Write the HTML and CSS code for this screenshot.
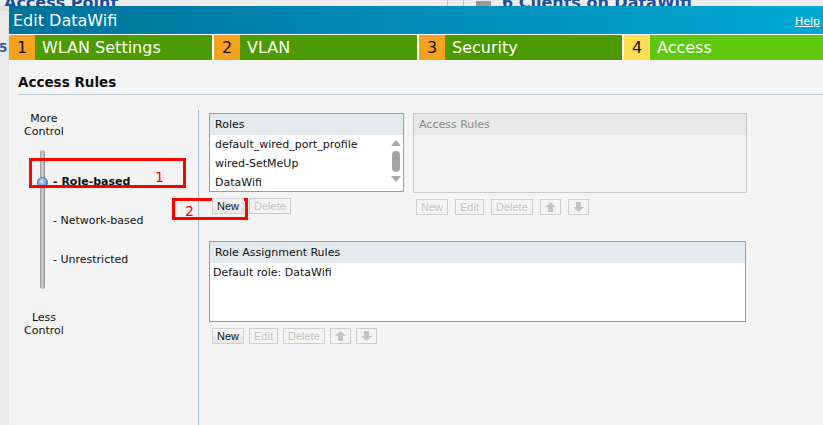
FILE: index.html
```html
<!DOCTYPE html>
<html lang="en">
<head>
    <meta charset="UTF-8">
    <title>Edit DataWifi</title>
    <link rel="stylesheet" href="styles.css">
</head>
<body>
    <!-- page behind the dialog -->
    <div class="backdrop">
        <span class="bd-title">Access Point</span>
        <span class="bd-sep"></span>
        <span class="bd-sep"></span>
        <span class="bd-icon"></span>
        <span class="bd-clients">6 Clients on DataWifi</span>
    </div>

    <div class="screen">
        <div class="bd-side"><span>5</span></div>

        <div class="dialog">
            <div class="titlebar">
                <span class="title">Edit DataWifi</span>
                <a class="help" href="#">Help</a>
            </div>

            <div class="steps">
                <div class="step"><span class="num">1</span><span class="label">WLAN Settings</span></div>
                <div class="step"><span class="num">2</span><span class="label">VLAN</span></div>
                <div class="step"><span class="num">3</span><span class="label">Security</span></div>
                <div class="step current"><span class="num">4</span><span class="label">Access</span></div>
            </div>

            <div class="content">
                <h2 class="section-title">Access Rules</h2>

                <div class="section">
                    <!-- LEFT: control level slider -->
                    <div class="slider-col">
                        <div class="control-label">More<br>Control</div>
                        <div class="scale">
                            <div class="track"><span class="thumb"></span></div>
                            <ul class="levels">
                                <li class="active">- Role-based</li>
                                <li>- Network-based</li>
                                <li>- Unrestricted</li>
                            </ul>
                        </div>
                        <div class="control-label less">Less<br>Control</div>
                    </div>

                    <!-- RIGHT: roles and rules -->
                    <div class="rules-col">
                        <div class="top-row">
                            <div class="block roles-block">
                                <div class="box">
                                    <div class="box-head">Roles</div>
                                    <div class="box-body list-body">
                                        <ul class="items">
                                            <li>default_wired_port_profile</li>
                                            <li>wired-SetMeUp</li>
                                            <li>DataWifi</li>
                                        </ul>
                                        <div class="scrollbar">
                                            <span class="arr up"></span>
                                            <span class="sthumb"></span>
                                            <span class="arr down"></span>
                                        </div>
                                    </div>
                                </div>
                                <div class="btn-row">
                                    <button class="btn">New</button>
                                    <button class="btn" disabled>Delete</button>
                                </div>
                            </div>

                            <div class="block access-block">
                                <div class="box disabled">
                                    <div class="box-head">Access Rules</div>
                                    <div class="box-body"></div>
                                </div>
                                <div class="btn-row wide">
                                    <button class="btn" disabled>New</button>
                                    <button class="btn" disabled>Edit</button>
                                    <button class="btn" disabled>Delete</button>
                                    <button class="btn arrow-btn first-arrow" disabled><svg width="11" height="10" viewBox="0 0 11 10"><path d="M5.5 0 L11 5 H8 V10 H3 V5 H0 Z" fill="#c4c4c4"/></svg></button>
                                    <button class="btn arrow-btn" disabled><svg width="11" height="10" viewBox="0 0 11 10"><path d="M5.5 10 L11 5 H8 V0 H3 V5 H0 Z" fill="#c4c4c4"/></svg></button>
                                </div>
                            </div>
                        </div>

                        <div class="block assign-block">
                            <div class="box">
                                <div class="box-head">Role Assignment Rules</div>
                                <div class="box-body assign-body">Default role: DataWifi</div>
                            </div>
                            <div class="btn-row">
                                <button class="btn">New</button>
                                <button class="btn" disabled>Edit</button>
                                <button class="btn" disabled>Delete</button>
                                <button class="btn arrow-btn" disabled><svg width="11" height="10" viewBox="0 0 11 10"><path d="M5.5 0 L11 5 H8 V10 H3 V5 H0 Z" fill="#c4c4c4"/></svg></button>
                                <button class="btn arrow-btn" disabled><svg width="11" height="10" viewBox="0 0 11 10"><path d="M5.5 10 L11 5 H8 V0 H3 V5 H0 Z" fill="#c4c4c4"/></svg></button>
                            </div>
                        </div>
                    </div>
                </div>
            </div>
        </div>
    </div>

    <!-- red annotation marks drawn over the screenshot -->
    <div class="mark mark-1"><span>1</span></div>
    <div class="mark mark-2"><span>2</span></div>
</body>
</html>
```

FILE: styles.css
```css
:root {
    --page-bg: #f4f4f4;
    --teal-dark: #00729a;
    --teal-light: #02a8d4;
    --step-num: #f7a21f;
    --step-label: #4c9b00;
    --step-num-cur: #ffdf55;
    --step-label-cur: #5ec80e;
    --box-border: #8e9fad;
    --box-head: #e2eaee;
    --muted: #c4c4c4;
    --mark: #ff0000;
}

* { box-sizing: border-box; margin: 0; padding: 0; }

body {
    font-family: 'DejaVu Sans', Verdana, sans-serif;
    font-size: 11px;
    color: #111;
    background: #e9e9e9;
    width: 823px;
    height: 425px;
    overflow: hidden;
    position: relative;
}

/* ---- page behind the dialog ---- */
.backdrop {
    height: 6px;
    overflow: hidden;
    display: flex;
    align-items: flex-end;
    background: #ececec;
    white-space: nowrap;
}
.bd-title, .bd-clients {
    font-weight: bold;
    font-size: 16px;
    line-height: 16px;
    color: #1c4f9a;
    margin-bottom: -5px;
}
.bd-title { margin-left: 4px; width: 443px; }
.bd-sep { width: 1px; height: 6px; background: #c4c4c4; margin-right: 15px; }
.bd-icon { width: 15px; height: 5px; background: #9a9a9a; margin: 0 11px 0 -3px; }
.bd-clients { color: #1f4fa0; }

.screen { display: flex; height: 419px; }

.bd-side {
    width: 8px;
    background: #eaeaea;
    border-top: 5px solid #e2e2e2;
    color: #2a5aa8;
    font-size: 12px;
    font-weight: bold;
    overflow: hidden;
}
.bd-side span { display: block; margin-top: 30px; margin-left: -1px; }

/* ---- dialog ---- */
.dialog {
    flex: 1;
    display: flex;
    flex-direction: column;
    border-left: 1px solid #dfe7ea;
    background: var(--page-bg);
}

.titlebar {
    height: 29px;
    display: flex;
    align-items: center;
    justify-content: space-between;
    padding: 0 3px 0 4px;
    background: linear-gradient(to right, var(--teal-dark), var(--teal-light));
    border-bottom: 1px solid #fff;
    color: #fff;
}
.title { font-size: 16px; }
.help { color: #fff; font-size: 11px; margin-top: 2px; }

.steps {
    display: grid;
    grid-template-columns: 203px 203px 203px 1fr;
    gap: 2px;
    background: #fff;
    height: 23px;
}
.step { display: flex; font-size: 16px; line-height: 25px; }
.step .num { width: 26px; text-align: center; background: var(--step-num); color: #111; }
.step .label { flex: 1; padding-left: 7px; background: var(--step-label); color: #fff; }
.step.current .num { background: var(--step-num-cur); }
.step.current .label { background: var(--step-label-cur); }

.content { flex: 1; display: flex; flex-direction: column; padding-left: 9px; }

.section-title {
    font-size: 13.5px;
    font-weight: bold;
    line-height: 18px;
    margin-top: 15px;
    padding-bottom: 3px;
    border-bottom: 1px solid #b9c6cf;
}

.section { flex: 1; display: flex; margin-top: 15px; margin-left: -9px; }

/* ---- slider ---- */
.slider-col {
    width: 190px;
    border-right: 1px solid #a9b7c2;
    padding-top: 2px;
}
.control-label {
    width: 54px;
    margin-left: 8px;
    text-align: center;
    line-height: 13px;
    font-size: 11px;
}
.control-label.less { margin-top: 22px; }

.scale { display: flex; margin-top: 12px; }
.track {
    position: relative;
    width: 5px;
    height: 139px;
    margin-left: 31px;
    border-radius: 3px;
    background: linear-gradient(to right, #9a9a9a, #cfcfcf 50%, #8c8c8c);
}
.thumb {
    position: absolute;
    left: -3px;
    top: 27px;
    width: 11px;
    height: 11px;
    border-radius: 50%;
    border: 1px solid #4a6c9c;
    background: radial-gradient(circle at 40% 35%, #d8e6fb, #6e95d2 60%, #3c66a8);
}
.levels { list-style: none; padding-left: 8px; padding-top: 12px; }
.levels li { height: 39px; line-height: 39px; }
.levels li.active { font-weight: bold; }

/* ---- rules ---- */
.rules-col { padding: 3px 0 0 10px; }
.top-row { display: flex; gap: 9px; }
.roles-block { width: 195px; }
.access-block { width: 334px; }
.assign-block { width: 537px; margin-top: 26px; }

.box { border: 1px solid var(--box-border); background: #fff; }
.box-head {
    height: 21px;
    line-height: 21px;
    padding-left: 5px;
    background: var(--box-head);
}
.box-body { height: 56px; }

.list-body { display: flex; }
.items { list-style: none; flex: 1; padding-left: 5px; }
.items li { line-height: 19px; }

.scrollbar {
    width: 10px;
    margin-right: 2px;
    display: flex;
    flex-direction: column;
    align-items: center;
    padding-top: 5px;
}
.arr { width: 0; height: 0; border-left: 5px solid transparent; border-right: 5px solid transparent; }
.arr.up { border-bottom: 6px solid #a8a8a8; }
.arr.down { border-top: 6px solid #a8a8a8; }
.sthumb { width: 8px; height: 21px; border-radius: 4px; background: #a5a5a5; margin: 5px 0 4px; }

.box.disabled { border-color: #c9c9c9; background: var(--page-bg); }
.box.disabled .box-head { background: #e8e8e8; color: #8a8a8a; }
.box.disabled .box-body { height: 57px; }

.assign-body { height: 58px; padding-left: 3px; padding-top: 3px; line-height: 14px; }

.btn-row { display: flex; gap: 5px; padding-left: 3px; margin-top: 6px; }
.btn-row.wide .btn + .btn { margin-left: 2px; }
.btn-row.wide .first-arrow { margin-left: 7px; }

.btn {
    position: relative;
    z-index: 2;
    font-family: 'Liberation Sans', Arial, sans-serif;
    font-size: 11px;
    height: 16px;
    line-height: 14px;
    padding: 0 4px;
    color: #111;
    background: linear-gradient(#f6f6f6, #e6e6e6);
    border: 1px solid #d2d2d2;
}
.btn:disabled { color: var(--muted); background: var(--page-bg); border-color: #cdcdcd; }
.arrow-btn { width: 21px; display: flex; align-items: center; justify-content: center; padding: 0; }

/* ---- annotation marks ---- */
.mark { position: absolute; z-index: 1; border: 3px solid var(--mark); color: var(--mark); font-size: 14px; }
.mark-1 { left: 29px; top: 158px; width: 157px; height: 30px; }
.mark-1 span { position: absolute; left: 123px; top: 8px; }
.mark-2 { left: 172px; top: 198px; width: 76px; height: 22px; }
.mark-2 span { position: absolute; left: 10px; top: 2px; }
```
